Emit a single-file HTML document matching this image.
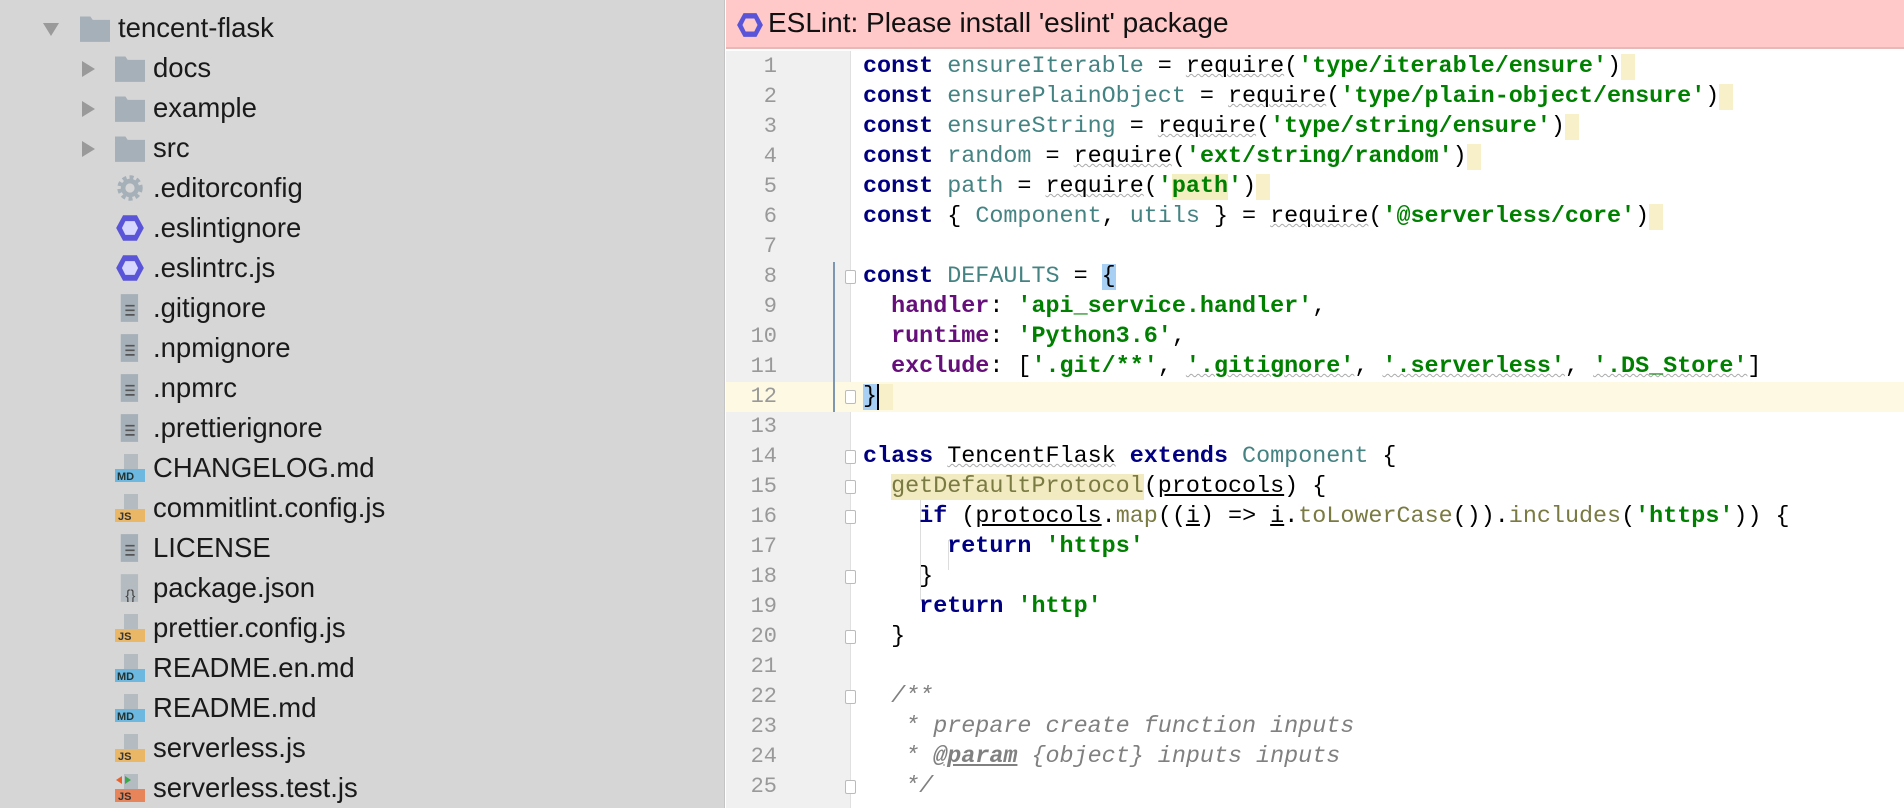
<!DOCTYPE html>
<html><head><meta charset="utf-8"><style>
*{margin:0;padding:0;box-sizing:border-box}
body{width:1904px;height:808px;overflow:hidden;background:#fff;position:relative;font-family:"Liberation Sans",sans-serif}
#side{position:absolute;left:0;top:0;width:725px;height:808px;background:#d6d6d6;border-right:1px solid #c4c4c4}
.row{position:absolute;height:40px;line-height:40px;font-size:27.5px;color:#1a1a1a;white-space:nowrap}
.row .t{position:absolute;top:0}
.arr{position:absolute;top:13px;width:0;height:0}
.ar{border-top:8px solid transparent;border-bottom:8px solid transparent;border-left:13px solid #9a9a9a}
.ad{border-left:8px solid transparent;border-right:8px solid transparent;border-top:13px solid #9a9a9a;top:15px}
.ic{position:absolute;top:6px;width:30px;height:28px}
#hdr{position:absolute;left:726px;top:0;width:1178px;height:49px;background:#ffc9c9;border-bottom:2px solid #e6b8b8}
#hdr span{position:absolute;left:42px;top:7px;font-size:28px;color:#111}
#gut{position:absolute;left:726px;top:51px;width:125px;height:757px;background:#f0f0f0;border-right:1px solid #e0e0e0}
.ln{position:absolute;left:726px;width:51px;text-align:right;font-family:"Liberation Mono",monospace;font-size:22px;color:#999;height:30px;line-height:30px}
.cl{position:absolute;left:863px;height:30px;line-height:30px;font-family:"Liberation Mono",monospace;font-size:23.4px;white-space:pre;color:#000}
.k{color:#000080;font-weight:bold}.s{color:#008000;font-weight:bold}.v{color:#458383}.p{color:#660e7a;font-weight:bold}.m{color:#7a7a43}.c{color:#808080;font-style:italic}
.w{text-decoration:underline wavy #aaa;text-decoration-thickness:1px}
.fold{position:absolute;left:845px;width:11px;height:14px;border:1px solid #bbb;background:#fff;border-radius:2px}
</style></head><body>
<div id="side">
<div class="row" style="top:8px;left:0;width:725px"><div class="arr ad" style="left:43px"></div>
<svg class="ic" style="left:80px" viewBox="0 0 26 24"><path d="M0 2h9l2 3h15v19H0z" fill="#a6b0b8"/></svg><span class="t" style="left:118px">tencent-flask</span></div>
<div class="row" style="top:48px;width:725px"><div class="arr ar" style="left:82px"></div><svg class="ic" style="left:115px" viewBox="0 0 26 24"><path d="M0 2h9l2 3h15v19H0z" fill="#a6b0b8"/></svg><span class="t" style="left:153px">docs</span></div>
<div class="row" style="top:88px;width:725px"><div class="arr ar" style="left:82px"></div><svg class="ic" style="left:115px" viewBox="0 0 26 24"><path d="M0 2h9l2 3h15v19H0z" fill="#a6b0b8"/></svg><span class="t" style="left:153px">example</span></div>
<div class="row" style="top:128px;width:725px"><div class="arr ar" style="left:82px"></div><svg class="ic" style="left:115px" viewBox="0 0 26 24"><path d="M0 2h9l2 3h15v19H0z" fill="#a6b0b8"/></svg><span class="t" style="left:153px">src</span></div>
<div class="row" style="top:168px;width:725px"><svg class="ic" style="left:115px" viewBox="0 0 26 24"><circle cx="13" cy="12" r="8" fill="none" stroke="#a6b0b8" stroke-width="6" stroke-dasharray="3 2.3"/><circle cx="13" cy="12" r="6" fill="none" stroke="#a6b0b8" stroke-width="4"/></svg><span class="t" style="left:153px">.editorconfig</span></div>
<div class="row" style="top:208px;width:725px"><svg class="ic" style="left:115px" viewBox="0 0 26 24"><polygon points="7,1 19,1 25,12 19,23 7,23 1,12" fill="#5a55d8"/><polygon points="9,6 17,6 20,12 17,18 9,18 6,12" fill="#d6d6ff"/></svg><span class="t" style="left:153px">.eslintignore</span></div>
<div class="row" style="top:248px;width:725px"><svg class="ic" style="left:115px" viewBox="0 0 26 24"><polygon points="7,1 19,1 25,12 19,23 7,23 1,12" fill="#5a55d8"/><polygon points="9,6 17,6 20,12 17,18 9,18 6,12" fill="#d6d6ff"/></svg><span class="t" style="left:153px">.eslintrc.js</span></div>
<div class="row" style="top:288px;width:725px"><svg class="ic" style="left:115px" viewBox="0 0 26 24"><path d="M5 0h15v24H5z" fill="#a6b0b8"/><path d="M9 10h8M9 14h8M9 18h8" stroke="#555" stroke-width="1.5"/></svg><span class="t" style="left:153px">.gitignore</span></div>
<div class="row" style="top:328px;width:725px"><svg class="ic" style="left:115px" viewBox="0 0 26 24"><path d="M5 0h15v24H5z" fill="#a6b0b8"/><path d="M9 10h8M9 14h8M9 18h8" stroke="#555" stroke-width="1.5"/></svg><span class="t" style="left:153px">.npmignore</span></div>
<div class="row" style="top:368px;width:725px"><svg class="ic" style="left:115px" viewBox="0 0 26 24"><path d="M5 0h15v24H5z" fill="#a6b0b8"/><path d="M9 10h8M9 14h8M9 18h8" stroke="#555" stroke-width="1.5"/></svg><span class="t" style="left:153px">.npmrc</span></div>
<div class="row" style="top:408px;width:725px"><svg class="ic" style="left:115px" viewBox="0 0 26 24"><path d="M5 0h15v24H5z" fill="#a6b0b8"/><path d="M9 10h8M9 14h8M9 18h8" stroke="#555" stroke-width="1.5"/></svg><span class="t" style="left:153px">.prettierignore</span></div>
<div class="row" style="top:448px;width:725px"><svg class="ic" style="left:115px" viewBox="0 0 30 28"><path d="M9 0h14v16H9z" fill="#b4bcc2"/><rect x="0" y="15" width="30" height="13" fill="#6cb8e0"/><text x="2" y="26" font-size="11" font-weight="bold" fill="#233" font-family="Liberation Sans">MD</text></svg><span class="t" style="left:153px">CHANGELOG.md</span></div>
<div class="row" style="top:488px;width:725px"><svg class="ic" style="left:115px" viewBox="0 0 30 28"><path d="M9 0h14v16H9z" fill="#b4bcc2"/><rect x="0" y="15" width="30" height="13" fill="#eab766"/><text x="3" y="26" font-size="11" font-weight="bold" fill="#333" font-family="Liberation Sans">JS</text></svg><span class="t" style="left:153px">commitlint.config.js</span></div>
<div class="row" style="top:528px;width:725px"><svg class="ic" style="left:115px" viewBox="0 0 26 24"><path d="M5 0h15v24H5z" fill="#a6b0b8"/><path d="M9 10h8M9 14h8M9 18h8" stroke="#555" stroke-width="1.5"/></svg><span class="t" style="left:153px">LICENSE</span></div>
<div class="row" style="top:568px;width:725px"><svg class="ic" style="left:115px" viewBox="0 0 26 24"><path d="M5 0h15v24H5z" fill="#b4bcc2"/><text x="9" y="23" font-size="13" fill="#444" font-family="Liberation Sans">{}</text></svg><span class="t" style="left:153px">package.json</span></div>
<div class="row" style="top:608px;width:725px"><svg class="ic" style="left:115px" viewBox="0 0 30 28"><path d="M9 0h14v16H9z" fill="#b4bcc2"/><rect x="0" y="15" width="30" height="13" fill="#eab766"/><text x="3" y="26" font-size="11" font-weight="bold" fill="#333" font-family="Liberation Sans">JS</text></svg><span class="t" style="left:153px">prettier.config.js</span></div>
<div class="row" style="top:648px;width:725px"><svg class="ic" style="left:115px" viewBox="0 0 30 28"><path d="M9 0h14v16H9z" fill="#b4bcc2"/><rect x="0" y="15" width="30" height="13" fill="#6cb8e0"/><text x="2" y="26" font-size="11" font-weight="bold" fill="#233" font-family="Liberation Sans">MD</text></svg><span class="t" style="left:153px">README.en.md</span></div>
<div class="row" style="top:688px;width:725px"><svg class="ic" style="left:115px" viewBox="0 0 30 28"><path d="M9 0h14v16H9z" fill="#b4bcc2"/><rect x="0" y="15" width="30" height="13" fill="#6cb8e0"/><text x="2" y="26" font-size="11" font-weight="bold" fill="#233" font-family="Liberation Sans">MD</text></svg><span class="t" style="left:153px">README.md</span></div>
<div class="row" style="top:728px;width:725px"><svg class="ic" style="left:115px" viewBox="0 0 30 28"><path d="M9 0h14v16H9z" fill="#b4bcc2"/><rect x="0" y="15" width="30" height="13" fill="#eab766"/><text x="3" y="26" font-size="11" font-weight="bold" fill="#333" font-family="Liberation Sans">JS</text></svg><span class="t" style="left:153px">serverless.js</span></div>
<div class="row" style="top:768px;width:725px"><svg class="ic" style="left:115px" viewBox="0 0 30 28"><path d="M9 0h14v16H9z" fill="#b4bcc2"/><path d="M7 2L1 6l6 4z" fill="#e8622c"/><path d="M10 2l6 4-6 4z" fill="#3aa84a"/><rect x="0" y="15" width="30" height="13" fill="#e8845a"/><text x="3" y="26" font-size="11" font-weight="bold" fill="#333" font-family="Liberation Sans">JS</text></svg><span class="t" style="left:153px">serverless.test.js</span></div>
</div>

<div id="hdr"><svg style="position:absolute;left:10px;top:11px" width="28" height="28" viewBox="0 0 26 26"><polygon points="7,2 19,2 25,13 19,24 7,24 1,13" fill="#5a55d8"/><polygon points="9,7 17,7 20,13 17,19 9,19 6,13" fill="#ffc9c9"/></svg><span>ESLint: Please install 'eslint' package</span></div>
<div id="gut"></div>
<div style="position:absolute;left:851px;top:382px;width:1053px;height:30px;background:#fdf9e3"></div>
<div style="position:absolute;left:726px;top:382px;width:125px;height:30px;background:#fdf9e3"></div>
<div style="position:absolute;left:833px;top:262px;width:2px;height:150px;background:#7d97b3"></div>
<div style="position:absolute;left:920px;top:480px;width:1px;height:120px;background:#ddd"></div>
<div style="position:absolute;left:948px;top:540px;width:1px;height:30px;background:#ddd"></div>

<div class="ln" style="top:52px">1</div><div class="ln" style="top:82px">2</div><div class="ln" style="top:112px">3</div><div class="ln" style="top:142px">4</div><div class="ln" style="top:172px">5</div><div class="ln" style="top:202px">6</div><div class="ln" style="top:232px">7</div><div class="ln" style="top:262px">8</div><div class="ln" style="top:292px">9</div><div class="ln" style="top:322px">10</div><div class="ln" style="top:352px">11</div><div class="ln" style="top:382px">12</div><div class="ln" style="top:412px">13</div><div class="ln" style="top:442px">14</div><div class="ln" style="top:472px">15</div><div class="ln" style="top:502px">16</div><div class="ln" style="top:532px">17</div><div class="ln" style="top:562px">18</div><div class="ln" style="top:592px">19</div><div class="ln" style="top:622px">20</div><div class="ln" style="top:652px">21</div><div class="ln" style="top:682px">22</div><div class="ln" style="top:712px">23</div><div class="ln" style="top:742px">24</div><div class="ln" style="top:772px">25</div>

<div class="fold" style="top:270px"></div><div class="fold" style="top:390px"></div><div class="fold" style="top:450px"></div><div class="fold" style="top:480px"></div><div class="fold" style="top:510px"></div><div class="fold" style="top:570px"></div><div class="fold" style="top:630px"></div><div class="fold" style="top:690px"></div><div class="fold" style="top:780px"></div>

<div class="cl" style="top:52px"><span class="k">const</span> <span class="v">ensureIterable</span> = <span class="w">require</span>(<span class="s">'type/iterable/ensure'</span>)<span style="background:#f8f0c8"> </span></div>
<div class="cl" style="top:82px"><span class="k">const</span> <span class="v">ensurePlainObject</span> = <span class="w">require</span>(<span class="s">'type/plain-object/ensure'</span>)<span style="background:#f8f0c8"> </span></div>
<div class="cl" style="top:112px"><span class="k">const</span> <span class="v">ensureString</span> = <span class="w">require</span>(<span class="s">'type/string/ensure'</span>)<span style="background:#f8f0c8"> </span></div>
<div class="cl" style="top:142px"><span class="k">const</span> <span class="v">random</span> = <span class="w">require</span>(<span class="s">'ext/string/random'</span>)<span style="background:#f8f0c8"> </span></div>
<div class="cl" style="top:172px"><span class="k">const</span> <span class="v">path</span> = <span class="w">require</span>(<span class="s">'<span style="background:#f4efc0">path</span>'</span>)<span style="background:#f8f0c8"> </span></div>
<div class="cl" style="top:202px"><span class="k">const</span> { <span class="v">Component</span>, <span class="v">utils</span> } = <span class="w">require</span>(<span class="s">'@serverless/core'</span>)<span style="background:#f8f0c8"> </span></div>
<div class="cl" style="top:262px"><span class="k">const</span> <span class="v">DEFAULTS</span> = <span style="background:#a8d0f4">{</span></div>
<div class="cl" style="top:292px">  <span class="p">handler</span>: <span class="s">'api_service.handler'</span>,</div>
<div class="cl" style="top:322px">  <span class="p">runtime</span>: <span class="s">'Python3.6'</span>,</div>
<div class="cl" style="top:352px">  <span class="p">exclude</span>: [<span class="s">'.git/**'</span>, <span class="s w">'.gitignore'</span>, <span class="s w">'.serverless'</span>, <span class="s w">'.DS_Store'</span>]</div>
<div class="cl" style="top:382px"><span style="background:#a8d0f4;border-right:2px solid #000">}</span><span style="background:#f8f0c8"> </span></div>
<div class="cl" style="top:442px"><span class="k">class</span> <span class="w">TencentFlask</span> <span class="k">extends</span> <span class="v">Component</span> {</div>
<div class="cl" style="top:472px">  <span class="m" style="background:#f2eac0">getDefaultProtocol</span>(<u>protocols</u>) {</div>
<div class="cl" style="top:502px">    <span class="k">if</span> (<u>protocols</u>.<span class="m">map</span>((<u>i</u>) =&gt; <u>i</u>.<span class="m">toLowerCase</span>()).<span class="m">includes</span>(<span class="s">'https'</span>)) {</div>
<div class="cl" style="top:532px">      <span class="k">return</span> <span class="s">'https'</span></div>
<div class="cl" style="top:562px">    }</div>
<div class="cl" style="top:592px">    <span class="k">return</span> <span class="s">'http'</span></div>
<div class="cl" style="top:622px">  }</div>
<div class="cl" style="top:682px">  <span class="c">/**</span></div>
<div class="cl" style="top:712px">   <span class="c">* prepare create function inputs</span></div>
<div class="cl" style="top:742px">   <span class="c">* <u style="font-weight:bold">@param</u> {object} inputs inputs</span></div>
<div class="cl" style="top:772px">   <span class="c">*/</span></div>
</body></html>
